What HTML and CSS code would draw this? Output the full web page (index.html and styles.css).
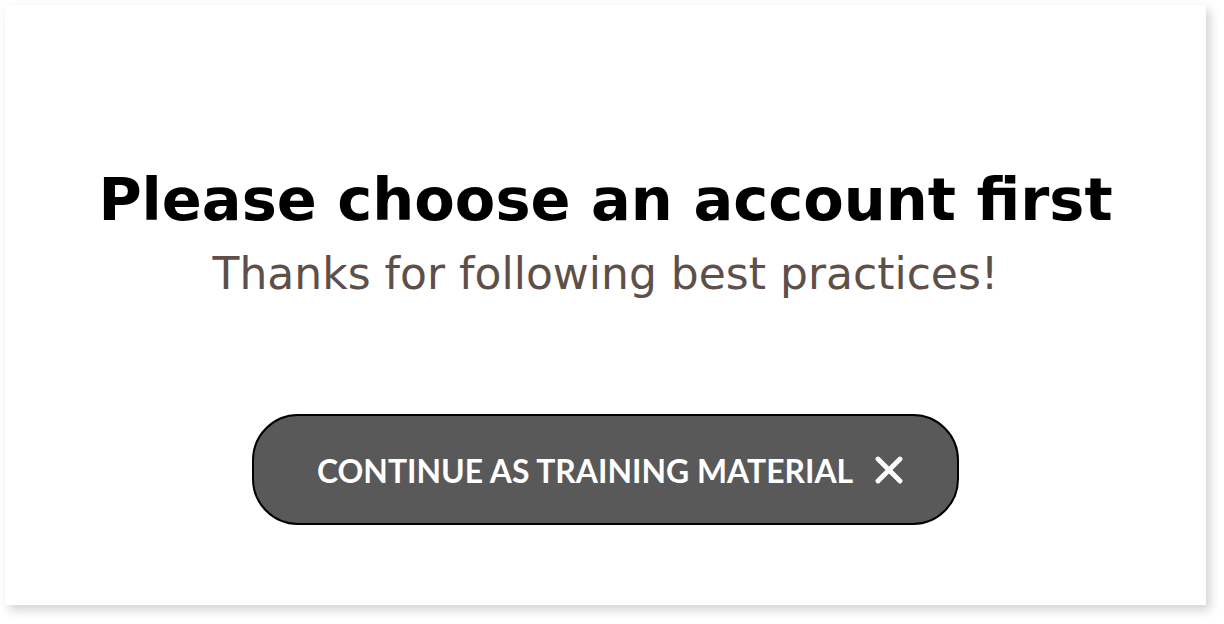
FILE: index.html
```html
<!DOCTYPE html>
<html lang="en">
<head>
<meta charset="utf-8">
<title>Please choose an account first</title>
<link rel="stylesheet" href="styles.css">
</head>
<body>
  <main class="card">
    <h1 class="title">Please choose an account first</h1>
    <p class="subtitle">Thanks for following best practices!</p>
    <button class="continue-btn" type="button">
      <span class="btn-label">CONTINUE AS TRAINING MATERIAL</span>
      <svg class="btn-icon" viewBox="0 0 28 28" width="28" height="28" aria-hidden="true">
        <path d="M3 3 L25 25 M25 3 L3 25" stroke="#ffffff" stroke-width="4.8" stroke-linecap="round" fill="none"/>
      </svg>
    </button>
  </main>
</body>
</html>
```

FILE: styles.css
```css
html, body {
  margin: 0;
  padding: 0;
  background: #ffffff;
}

body {
  width: 1224px;
  height: 624px;
  overflow: hidden;
}

.card {
  box-sizing: border-box;
  margin: 5px 0 0 5px;
  width: 1201px;
  height: 600px;
  background: #ffffff;
  box-shadow: 4px 5px 10px rgba(0, 0, 0, 0.18);
  display: flex;
  flex-direction: column;
  align-items: center;
  padding-top: 160px;
}

.title {
  margin: 0;
  font-family: "DejaVu Sans", sans-serif;
  font-weight: bold;
  font-size: 59px;
  line-height: 70px;
  color: #000000;
}

.subtitle {
  margin: 12px 0 0 0;
  font-family: "DejaVu Sans", sans-serif;
  font-size: 44px;
  line-height: 54px;
  color: #5e4f48;
}

.continue-btn {
  margin-top: 113px;
  box-sizing: border-box;
  width: 707px;
  height: 111px;
  border: 2px solid #000000;
  border-radius: 46px;
  background: #595959;
  display: flex;
  align-items: center;
  padding: 2px 0 0 63px;
  gap: 22px;
  cursor: pointer;
}

.btn-label {
  font-family: "Lato", sans-serif;
  font-weight: bold;
  font-size: 31.9px;
  color: #ffffff;
}

.btn-icon {
  display: block;
  flex: none;
  margin-top: -2px;
}
```
